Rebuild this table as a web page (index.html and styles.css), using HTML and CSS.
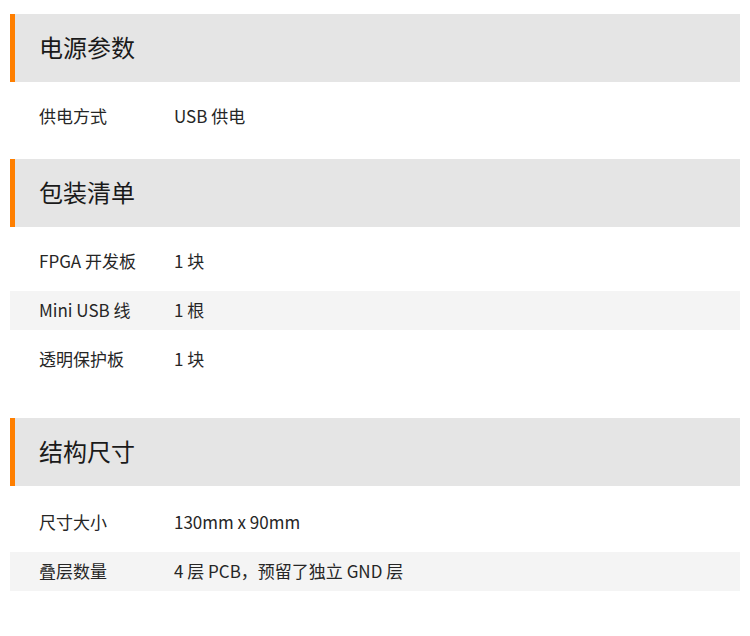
FILE: index.html
```html
<!DOCTYPE html>
<html lang="zh-CN">
<head>
<meta charset="utf-8">
<link rel="stylesheet" href="styles.css">
</head>
<body>
<div class="page">
  <section class="sec sec-1">
    <h2 class="sec-title">电源参数</h2>
    <div class="rows">
      <div class="row"><span class="label">供电方式</span><span class="value">USB 供电</span></div>
    </div>
  </section>
  <section class="sec sec-2">
    <h2 class="sec-title">包装清单</h2>
    <div class="rows">
      <div class="row"><span class="label">FPGA 开发板</span><span class="value">1 块</span></div>
      <div class="row alt"><span class="label">Mini USB 线</span><span class="value">1 根</span></div>
      <div class="row"><span class="label">透明保护板</span><span class="value">1 块</span></div>
    </div>
  </section>
  <section class="sec sec-3">
    <h2 class="sec-title">结构尺寸</h2>
    <div class="rows">
      <div class="row"><span class="label">尺寸大小</span><span class="value">130mm x 90mm</span></div>
      <div class="row alt"><span class="label">叠层数量</span><span class="value">4 层 PCB，预留了独立 GND 层</span></div>
    </div>
  </section>
</div>
</body>
</html>
```
FILE: styles.css
```css
html, body {
  margin: 0;
  padding: 0;
  background: #ffffff;
}
body {
  font-family: "Noto Sans CJK SC", "Noto Sans", sans-serif;
  color: #222222;
}
.page {
  padding: 14px 10px 0 10px;
  display: flex;
  flex-direction: column;
}
.sec-title {
  margin: 0;
  height: 68px;
  box-sizing: border-box;
  background: #e5e5e5;
  border-left: 5px solid #ff7f00;
  padding: 0 0 3px 24px;
  display: flex;
  align-items: center;
  font-size: 24px;
  font-weight: 400;
  color: #1a1a1a;
}
.rows {
  margin-top: 15px;
  display: flex;
  flex-direction: column;
  gap: 10px;
}
.sec-3 .rows {
  margin-top: 17px;
}
.row {
  height: 39px;
  box-sizing: border-box;
  padding-bottom: 3px;
  display: flex;
  align-items: center;
  font-size: 17px;
  color: #262626;
}
.row.alt {
  background: #f4f4f4;
}
.label {
  width: 135px;
  padding-left: 29px;
  flex-shrink: 0;
}
.sec-1 {
  margin-bottom: 23px;
}
.sec-2 {
  margin-bottom: 39px;
}
```
